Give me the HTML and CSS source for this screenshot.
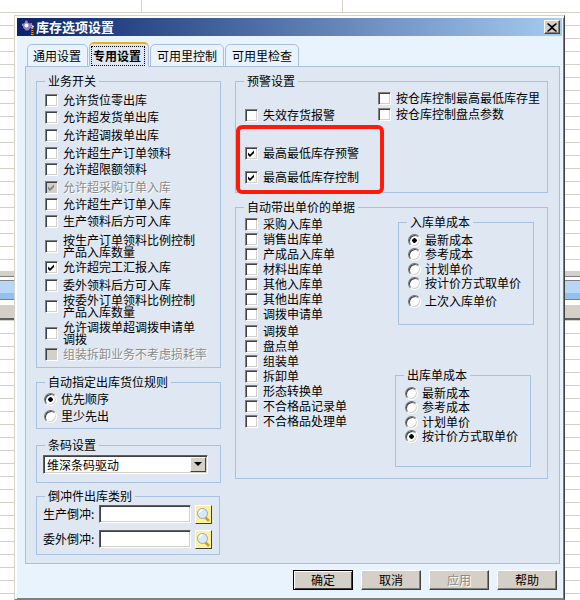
FILE: index.html
```html
<!DOCTYPE html>
<html lang="zh-CN">
<head>
    <meta charset="UTF-8">
    <title>库存选项设置</title>
    <link rel="stylesheet" href="styles.css">
</head>
<body>

    <div class="sheet">
        <div class="sheet-top"></div>
        <div class="sheet-band">
            <div class="band-gray"></div>
            <div class="band-blue"></div>
            <div class="band-status"></div>
        </div>
        <div class="sheet-bottom"></div>
    </div>

    <div class="dialog">
        <div class="titlebar">
            <svg class="title-icon" width="16" height="17" viewBox="0 0 16 17">
                <path d="M5 1h3v2l2 1 2-1 1 2-1 2v2l-2 1-1 2H5l-1-2-2-1 1-1-2-2 1-2 2 0z" fill="#8f7fd0" stroke="#1c1450" stroke-width="1"/>
                <circle cx="6.5" cy="6.5" r="2" fill="#fff"/>
                <path d="M11 6l3 1-1 2z" fill="#fff"/>
                <path d="M11 8h2l1 8h-3z" fill="#e8a020"/>
                <path d="M11 10l3 1M11 12l3 1M11 14l3 1" stroke="#1a1a1a" stroke-width="1"/>
            </svg>
            <span class="title-text">库存选项设置</span>
            <button class="close-btn" type="button" aria-label="关闭">
                <svg width="10" height="9" viewBox="0 0 10 9"><path d="M1 0l4 3 4-3 1 1-4 3.500 4 3.500-1 1-4-3-4 3-1-1 4-3.500-4-3.500z" fill="#000"/></svg>
            </button>
        </div>

        <div class="tabs">
            <div class="tab tab-first">通用设置</div>
            <div class="tab tab-active"><span>专用设置</span></div>
            <div class="tab">可用里控制</div>
            <div class="tab">可用里检查</div>
        </div>

        <div class="pane">
            <div class="col-left">
                <fieldset class="group group-switches">
                    <legend>业务开关</legend>
                    <div class="rows rows-switches">
                        <label class="opt"><input type="checkbox"><span>允许货位零出库</span></label>
                        <label class="opt"><input type="checkbox"><span>允许超发货单出库</span></label>
                        <label class="opt"><input type="checkbox"><span>允许超调拨单出库</span></label>
                        <label class="opt"><input type="checkbox"><span>允许超生产订单领料</span></label>
                        <label class="opt"><input type="checkbox"><span>允许超限额领料</span></label>
                        <label class="opt off"><input type="checkbox" checked disabled><span>允许超采购订单入库</span></label>
                        <label class="opt"><input type="checkbox"><span>允许超生产订单入库</span></label>
                        <label class="opt"><input type="checkbox"><span>生产领料后方可入库</span></label>
                        <label class="opt"><input type="checkbox"><span class="wrap">按生产订单领料比例控制产品入库数量</span></label>
                        <label class="opt"><input type="checkbox" checked><span>允许超完工汇报入库</span></label>
                        <label class="opt"><input type="checkbox"><span>委外领料后方可入库</span></label>
                        <label class="opt"><input type="checkbox"><span class="wrap">按委外订单领料比例控制产品入库数量</span></label>
                        <label class="opt"><input type="checkbox"><span class="wrap">允许调拨单超调拨申请单调拨</span></label>
                        <label class="opt off"><input type="checkbox" disabled><span>组装拆卸业务不考虑损耗率</span></label>
                    </div>
                </fieldset>

                <fieldset class="group group-rule">
                    <legend>自动指定出库货位规则</legend>
                    <div class="rows rows-rule">
                        <label class="opt opt-radio"><input type="radio" name="rule" checked><span>优先顺序</span></label>
                        <label class="opt opt-radio"><input type="radio" name="rule"><span>里少先出</span></label>
                    </div>
                </fieldset>

                <fieldset class="group group-barcode">
                    <legend>条码设置</legend>
                    <div class="combo">
                        <span class="combo-text">维深条码驱动</span>
                        <span class="combo-btn"></span>
                    </div>
                </fieldset>

                <fieldset class="group group-back">
                    <legend>倒冲件出库类别</legend>
                    <div class="lookup">
                        <label>生产倒冲:</label>
                        <input type="text">
                        <button class="find-btn" type="button" aria-label="查找">
                            <svg width="15" height="16" viewBox="0 0 15 16"><path d="M9 10l4 4" stroke="#c8a030" stroke-width="2.500"/><circle cx="6.500" cy="6.500" r="5" fill="#d8e8f8" stroke="#9aa8b8"/><path d="M3.500 6a3 3 0 0 1 3-3" stroke="#fff" stroke-width="1.500" fill="none"/></svg>
                        </button>
                    </div>
                    <div class="lookup">
                        <label>委外倒冲:</label>
                        <input type="text">
                        <button class="find-btn" type="button" aria-label="查找">
                            <svg width="15" height="16" viewBox="0 0 15 16"><path d="M9 10l4 4" stroke="#c8a030" stroke-width="2.500"/><circle cx="6.500" cy="6.500" r="5" fill="#d8e8f8" stroke="#9aa8b8"/><path d="M3.500 6a3 3 0 0 1 3-3" stroke="#fff" stroke-width="1.500" fill="none"/></svg>
                        </button>
                    </div>
                </fieldset>
            </div>

            <div class="col-right">
                <fieldset class="group group-alert">
                    <legend>预警设置</legend>
                    <div class="alert-body">
                        <div class="rows rows-alert">
                            <label class="opt"><input type="checkbox"><span>失效存货报警</span></label>
                            <label class="opt"><input type="checkbox" checked><span>最高最低库存预警</span></label>
                            <label class="opt"><input type="checkbox" checked><span>最高最低库存控制</span></label>
                        </div>
                        <div class="rows rows-store">
                            <label class="opt"><input type="checkbox"><span>按仓库控制最高最低库存里</span></label>
                            <label class="opt"><input type="checkbox"><span>按仓库控制盘点参数</span></label>
                        </div>
                    </div>
                </fieldset>

                <fieldset class="group group-price">
                    <legend>自动带出单价的单据</legend>
                    <div class="price-body">
                        <div class="rows rows-bills">
                            <label class="opt"><input type="checkbox"><span>采购入库单</span></label>
                            <label class="opt"><input type="checkbox"><span>销售出库单</span></label>
                            <label class="opt"><input type="checkbox"><span>产成品入库单</span></label>
                            <label class="opt"><input type="checkbox"><span>材料出库单</span></label>
                            <label class="opt"><input type="checkbox"><span>其他入库单</span></label>
                            <label class="opt"><input type="checkbox"><span>其他出库单</span></label>
                            <label class="opt"><input type="checkbox"><span>调拨申请单</span></label>
                            <label class="opt"><input type="checkbox"><span>调拨单</span></label>
                            <label class="opt"><input type="checkbox"><span>盘点单</span></label>
                            <label class="opt"><input type="checkbox"><span>组装单</span></label>
                            <label class="opt"><input type="checkbox"><span>拆卸单</span></label>
                            <label class="opt"><input type="checkbox"><span>形态转换单</span></label>
                            <label class="opt"><input type="checkbox"><span>不合格品记录单</span></label>
                            <label class="opt"><input type="checkbox"><span>不合格品处理单</span></label>
                        </div>
                        <div class="cost-col">
                            <fieldset class="group group-in">
                                <legend>入库单成本</legend>
                                <div class="rows rows-in">
                                    <label class="opt opt-radio"><input type="radio" name="cost-in" checked><span>最新成本</span></label>
                                    <label class="opt opt-radio"><input type="radio" name="cost-in"><span>参考成本</span></label>
                                    <label class="opt opt-radio"><input type="radio" name="cost-in"><span>计划单价</span></label>
                                    <label class="opt opt-radio"><input type="radio" name="cost-in"><span>按计价方式取单价</span></label>
                                    <label class="opt opt-radio"><input type="radio" name="cost-in"><span>上次入库单价</span></label>
                                </div>
                            </fieldset>
                            <fieldset class="group group-out">
                                <legend>出库单成本</legend>
                                <div class="rows rows-out">
                                    <label class="opt opt-radio"><input type="radio" name="cost-out"><span>最新成本</span></label>
                                    <label class="opt opt-radio"><input type="radio" name="cost-out"><span>参考成本</span></label>
                                    <label class="opt opt-radio"><input type="radio" name="cost-out"><span>计划单价</span></label>
                                    <label class="opt opt-radio"><input type="radio" name="cost-out" checked><span>按计价方式取单价</span></label>
                                </div>
                            </fieldset>
                        </div>
                    </div>
                </fieldset>
            </div>
        </div>

        <div class="footer">
            <button class="btn btn-default" type="button">确定</button>
            <button class="btn" type="button">取消</button>
            <button class="btn" type="button" disabled>应用</button>
            <button class="btn" type="button">帮助</button>
        </div>
    </div>

    <div class="mark"></div>

</body>
</html>
```

FILE: styles.css
```css
* {
    margin: 0;
    padding: 0;
    box-sizing: border-box;
}
body {
    position: relative;
    width: 580px;
    height: 600px;
    overflow: hidden;
    background-color: #fff;
    color: #000;
    font-family: "Noto Sans CJK SC", "Liberation Sans", sans-serif;
    font-size: 12px;
}

/* spreadsheet behind the dialog */
.sheet-top {
    height: 271px;
    background-color: #fff;
    background-image:
        linear-gradient(#d4d0c8, #d4d0c8),
        linear-gradient(#d4d0c8, #d4d0c8),
        repeating-linear-gradient(transparent 0, transparent 12px, #d4d0c8 12px, #d4d0c8 13px);
    background-size: 1px 13px, 1px 13px, 100% 100%;
    background-position: 141px 0, 342px 0, 0 0;
    background-repeat: no-repeat;
}
.sheet-band {
    height: 49px;
    background-color: #fff;
}
.band-gray {
    height: 6px;
    background-color: #d4d0c8;
    border-bottom: 1px solid #808080;
}
.band-blue {
    height: 20px;
    margin-top: 3px;
    background: linear-gradient(#b8d6f6 0, #b8d6f6 65%, #94c0f0 65%);
    border-top: 1px solid #808080;
    border-bottom: 1px solid #808080;
}
.band-status {
    height: 15px;
    margin-top: 5px;
    background-color: #d4d0c8;
    border-bottom: 2px solid #606060;
}
.sheet-bottom {
    height: 280px;
    background-image: repeating-linear-gradient(#d4d0c8 0, #d4d0c8 1px, #fff 1px, #fff 13px);
}

/* dialog window */
.dialog {
    position: absolute;
    left: 14px;
    top: 15px;
    width: 551px;
    height: 585px;
    padding: 2px;
    background-color: #e9f3fd;
    border: 1px solid;
    border-color: #d4d0c8 #404040 #808080 #d4d0c8;
    box-shadow: inset 1px 1px 0 #fff, inset 2px 2px 0 #fff, inset -1px -1px 0 #808080;
}
.titlebar {
    display: flex;
    align-items: center;
    height: 18px;
    padding: 0 2px 0 3px;
    background: linear-gradient(to right, #0a246a, #a6caf0);
}
.title-icon {
    flex: none;
}
.title-text {
    color: #fff;
    font-size: 13px;
    font-weight: bold;
    line-height: 18px;
}
.close-btn {
    display: flex;
    align-items: center;
    justify-content: center;
    width: 16px;
    height: 14px;
    margin-left: auto;
    background-color: #d4d0c8;
    border: 1px solid;
    border-color: #fff #404040 #404040 #fff;
    box-shadow: inset -1px -1px 0 #808080;
}

/* tabs */
.tabs {
    position: relative;
    z-index: 1;
    display: flex;
    align-items: flex-end;
    gap: 1px;
    height: 31px;
    margin-left: 10px;
    margin-bottom: -1px;
}
.tab {
    height: 23px;
    padding: 0 6px;
    line-height: 22px;
    background-color: #e9f3fd;
    border: 1px solid #a9bfdc;
    border-radius: 5px 5px 0 0;
}
.tab-first {
    padding-left: 5px;
}
.tab-active {
    height: 25px;
    padding: 3px 4px 0 2px;
    font-weight: bold;
    background-color: #dfe8f2;
    border-top: 2px solid #e8b020;
    border-bottom-color: #dfe8f2;
}
.tab-active span {
    display: block;
    width: 52px;
    height: 18px;
    padding: 0 1px;
    line-height: 17px;
    outline: 1px dotted #000;
}

.pane {
    display: flex;
    gap: 14px;
    width: 535px;
    height: 498px;
    margin-left: 8px;
    padding: 7px 0 0 10px;
    background-color: #dfe8f2;
    border: 1px solid #a9bfdc;
}
.col-left {
    flex: none;
    width: 185px;
}
.col-right {
    flex: none;
    width: 313px;
}

/* group boxes */
.group {
    display: block;
    min-width: 0;
    border: 1px solid #a9c1e0;
}
.group legend {
    height: 14px;
    margin-left: 8px;
    padding: 0 3px;
    line-height: 14px;
}
.group-switches {
    height: 294px;
    padding-top: 3px;
}
.group-rule {
    height: 54px;
    margin-top: 7px;
    padding-top: 1px;
}
.group-barcode {
    height: 45px;
    margin-top: 9px;
    padding-top: 3px;
}
.group-back {
    width: 184px;
    height: 66px;
    margin-top: 6px;
    padding-top: 2px;
}
.group-alert {
    height: 119px;
}
.group-price {
    height: 279px;
    margin-top: 7px;
}
.group-in {
    width: 136px;
    height: 110px;
    margin: 1px 0 0 3px;
    padding-top: 2px;
}
.group-out {
    width: 136px;
    height: 99px;
    margin-top: 43px;
    padding-top: 2px;
}

/* option rows: track size is the distance to the next row */
.rows {
    display: grid;
    align-items: start;
}
.rows-switches {
    padding-left: 8px;
    grid-template-rows: 17px 18px 18px 16px 18px 17px 17px 22px 24px 18px 18px 27px 24px 18px;
}
.rows-rule {
    padding-left: 7px;
    grid-template-rows: 17px 18px;
}
.rows-alert {
    width: 142px;
    padding: 18px 0 0 9px;
    grid-template-rows: 38px 24px 18px;
}
.rows-store {
    padding-top: 1px;
    grid-template-rows: 16px 18px;
}
.rows-bills {
    width: 159px;
    padding: 1px 0 0 9px;
    grid-template-rows: repeat(6, 15px) 17px repeat(6, 15px) 18px;
}
.rows-in {
    padding-left: 9px;
    grid-template-rows: 14px 15px 14px 18px 18px;
}
.rows-out {
    padding-left: 9px;
    grid-template-rows: 14px 15px 14px 18px;
}
.alert-body, .price-body {
    display: flex;
}
.cost-col {
    flex: none;
}

.opt {
    display: flex;
    align-items: center;
    gap: 5px;
    min-height: 18px;
    line-height: 12px;
    white-space: nowrap;
}
.opt-radio {
    gap: 4px;
}
.opt .wrap {
    width: 132px;
    white-space: normal;
}
.off {
    color: #8a8a8a;
    text-shadow: 1px 1px 0 #fff;
}

.opt input {
    flex: none;
    appearance: none;
    width: 13px;
    height: 13px;
    background-color: #fff;
    border: 1px solid;
    border-color: #808080 #fff #fff #808080;
    box-shadow: inset 1px 1px 0 #404040, inset -1px -1px 0 #d4d0c8;
}
.opt input[type="checkbox"]:checked {
    background-image: url("data:image/svg+xml,%3Csvg xmlns='http://www.w3.org/2000/svg' width='11' height='11'%3E%3Cpath d='M2 4.500l2 2 4-4v2.500l-4 4-2-2z' fill='%23000'/%3E%3C/svg%3E");
    background-position: center;
    background-repeat: no-repeat;
}
.opt input[type="checkbox"]:disabled {
    background-color: #d4d0c8;
}
.opt input[type="checkbox"]:disabled:checked {
    background-image: url("data:image/svg+xml,%3Csvg xmlns='http://www.w3.org/2000/svg' width='11' height='11'%3E%3Cpath d='M2 4.500l2 2 4-4v2.500l-4 4-2-2z' fill='%23808080'/%3E%3C/svg%3E");
}
.opt input[type="radio"] {
    border-radius: 50%;
    border-color: #707070 #fff #fff #707070;
}
.opt input[type="radio"]:checked {
    background-image: radial-gradient(circle, #000 2px, #fff 2.500px);
}

/* barcode combo */
.combo {
    display: flex;
    align-items: center;
    width: 165px;
    height: 19px;
    margin-left: 6px;
    background-color: #fff;
    border: 1px solid;
    border-color: #606060 #fff #fff #606060;
    box-shadow: inset 1px 1px 0 #404040, inset -1px -1px 0 #d4d0c8;
}
.combo-text {
    padding-left: 3px;
}
.combo-btn {
    position: relative;
    width: 16px;
    height: 15px;
    margin-left: auto;
    margin-right: 1px;
    background-color: #d4d0c8;
    border: 1px solid;
    border-color: #fff #404040 #404040 #fff;
}
.combo-btn::after {
    content: "";
    position: absolute;
    left: 3px;
    top: 4px;
    border: 4px solid transparent;
    border-top: 4px solid #000;
    border-bottom: none;
}

/* lookup rows */
.lookup {
    display: flex;
    align-items: flex-start;
    height: 19px;
    margin: 0 0 6px 6px;
}
.lookup label {
    flex: none;
    width: 56px;
    line-height: 18px;
}
.lookup input {
    width: 92px;
    height: 18px;
    background-color: #fff;
    border: 1px solid;
    border-color: #606060 #fff #fff #606060;
    box-shadow: inset 1px 1px 0 #404040, inset -1px -1px 0 #d4d0c8;
}
.find-btn {
    display: flex;
    align-items: center;
    justify-content: center;
    width: 17px;
    height: 19px;
    margin-left: 4px;
    background-color: #fdf0a0;
    border: 1px solid;
    border-color: #fff #404040 #404040 #fff;
}

/* footer buttons */
.footer {
    display: flex;
    justify-content: flex-end;
    gap: 8px;
    padding: 6px 5px 0 0;
}
.btn {
    width: 60px;
    height: 20px;
    font-family: inherit;
    font-size: 12px;
    line-height: 16px;
    color: #000;
    background-color: #d4d0c8;
    border: 1px solid;
    border-color: #fff #404040 #404040 #fff;
    box-shadow: inset -1px -1px 0 #808080;
}
.btn-default {
    outline: 1px solid #000;
    outline-offset: -1px;
    border-color: #000;
    box-shadow: inset 1px 1px 0 #fff, inset -1px -1px 0 #404040;
}
.btn:disabled {
    color: #8a8a8a;
    text-shadow: 1px 1px 0 #fff;
}

/* red marker drawn over the dialog */
.mark {
    position: absolute;
    left: 236px;
    top: 125px;
    width: 148px;
    height: 69px;
    border: 4px solid #ff1a0a;
    border-radius: 6px;
}
```
